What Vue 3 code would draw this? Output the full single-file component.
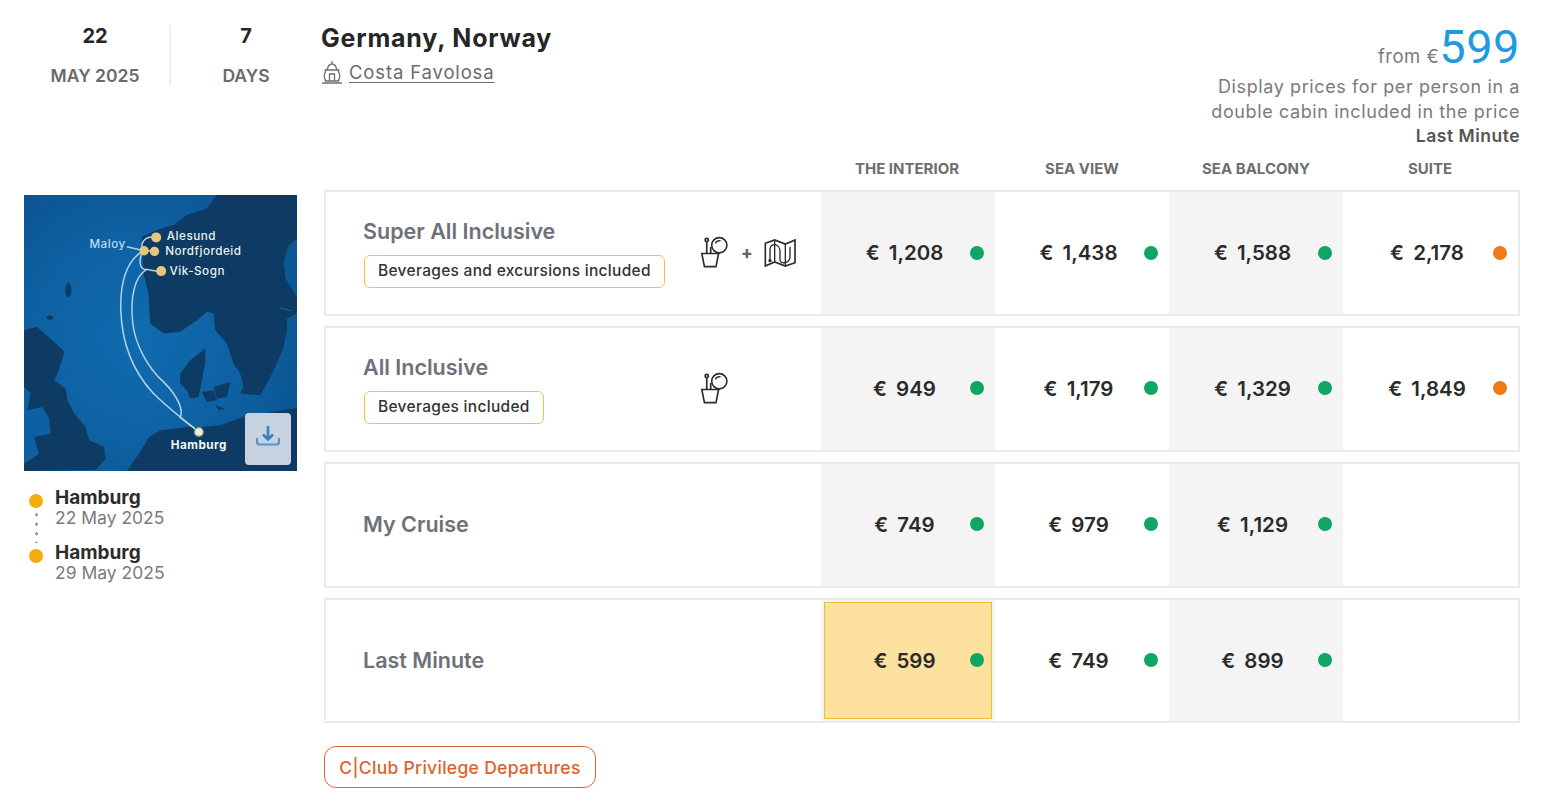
<script setup>
const cols = ['The Interior', 'Sea View', 'Sea Balcony', 'Suite']
const rows = [
  { name: 'Super All Inclusive', badge: 'Beverages and excursions included', drink: true, map: true,
    prices: [['1,208', 'g'], ['1,438', 'g'], ['1,588', 'g'], ['2,178', 'o']] },
  { name: 'All Inclusive', badge: 'Beverages included', drink: true, map: false,
    prices: [['949', 'g'], ['1,179', 'g'], ['1,329', 'g'], ['1,849', 'o']] },
  { name: 'My Cruise', prices: [['749', 'g'], ['979', 'g'], ['1,129', 'g'], null] },
  { name: 'Last Minute', best: 0, prices: [['599', 'g'], ['749', 'g'], ['899', 'g'], null] },
]
const stops = [
  { city: 'Hamburg', date: '22 May 2025' },
  { city: 'Hamburg', date: '29 May 2025' },
]
</script>

<template>
  <div class="page">
    <header class="top">
      <div class="fact fact-date"><strong>22</strong><span>MAY 2025</span></div>
      <div class="fact fact-days"><strong>7</strong><span>DAYS</span></div>
      <div class="title">
        <h1>Germany, Norway</h1>
        <div class="ship">
          <svg width="22" height="24" viewBox="0 0 22 24" fill="none" stroke="#6f6f6f" stroke-width="1.300">
            <path d="M11 1v3M6 10c1-4 3-6 5-6s4 2 5 6M3.500 10h15M5 10l-2 6M17 10l2 6M3 16l1.500 5h13l1.500-5M8.500 21v-7h5v7M1 23h20" />
          </svg>
          <a>Costa Favolosa</a>
        </div>
      </div>
      <div class="price">
        <div class="from">from €<b>599</b></div>
        <p>Display prices for per person in a<br />double cabin included in the price</p>
        <strong>Last Minute</strong>
      </div>
    </header>

    <div class="body">
      <aside class="side">
        <div class="map">
          <svg class="map-art" viewBox="72 45 818 827" preserveAspectRatio="none">
            <defs>
              <radialGradient id="sea" cx="42%" cy="52%" r="65%">
                <stop offset="0" stop-color="#106baf" />
                <stop offset="0.55" stop-color="#0e62a4" />
                <stop offset="1" stop-color="#0c5592" />
              </radialGradient>
              <filter id="soft"><feGaussianBlur stdDeviation="1.800" /></filter>
            </defs>
            <rect x="72" y="45" width="818" height="827" fill="url(#sea)" />
            <g fill="#0b3a63" filter="url(#soft)">
              <path d="M425 170 480 146 520 135 560 105 590 95 620 85 650 45H890V175L865 195 850 245 855 295 880 335 890 355V400L860 415 860 450 850 500 830 550 800 610 780 645 720 640 730 620 720 580 700 550 680 490 645 450 640 400 620 395 590 420 540 455 490 460 450 430 445 340 430 280Z" />
              <path d="M540 580 570 540 615 505 615 550 605 600 595 650 570 655 560 630 540 610Z" />
              <path d="M605 635 640 630 650 660 620 665Z" />
              <path d="M640 620 690 605 680 650 650 655Z" />
              <path d="M645 675 675 685 655 690Z" />
              <path d="M380 872 417 820 447 770 480 750 560 740 610 740 660 735 730 710 880 685 890 685V872Z" />
              <path d="M72 450 110 440 190 510 192 520 172 580 162 600 197 625 202 660 222 700 257 740 267 780 312 800 317 835 287 868 72 872Z" />
              <ellipse cx="205" cy="330" rx="9" ry="22" />
              <ellipse cx="150" cy="412" rx="10" ry="6" />
            </g>
            <path d="M72 620 92 640 82 690 127 680 147 715 152 760 102 770 117 820 72 850Z" fill="#0e60a2" filter="url(#soft)" />
            <path d="M838 383 875 393" stroke="#1a6aa8" stroke-width="3" fill="none" />
            <g fill="none" stroke="#afd2e8" stroke-width="4.500">
              <path d="M430 212C380 240 360 300 362 390 365 480 395 570 460 640 510 690 560 725 596 755" />
              <path d="M440 268C400 290 390 360 398 430 405 490 440 560 490 605 535 650 550 690 540 712L596 755" />
              <path d="M430 212C418 195 430 165 468 172M430 212C415 235 415 270 440 268 455 270 470 275 483 273M432 212H463M380 200 432 212" />
            </g>
            <g fill="#e5c67c">
              <circle cx="468" cy="172" r="15" />
              <circle cx="432" cy="212" r="14" />
              <circle cx="463" cy="214" r="14" />
              <circle cx="483" cy="273" r="15" />
            </g>
            <circle cx="596" cy="755" r="13" fill="#f1eed6" stroke="#8c9c86" stroke-width="4" />
            <g class="map-label">
              <text x="500" y="181">Alesund</text>
              <text x="495" y="226">Nordfjordeid</text>
              <text x="508" y="285">Vik-Sogn</text>
              <text class="maloy" x="268" y="203">Maloy</text>
              <text class="hub" x="512" y="807">Hamburg</text>
            </g>
          </svg>
          <button class="download" aria-label="Download map">
            <svg width="24" height="20" viewBox="0 0 24 20" fill="none" stroke="#3a7fc0" stroke-width="2.200">
              <path d="M12 0v13M7 8.500l5 5 5-5" stroke-width="2.600" />
              <path d="M1 12v4a2.500 2.500 0 0 0 2.500 2.500h17A2.500 2.500 0 0 0 23 16v-4" stroke="#5d93c8" />
            </svg>
          </button>
        </div>
        <ul class="stops">
          <li v-for="s in stops" :key="s.date">
            <i class="stop-dot"></i>
            <div><strong>{{ s.city }}</strong><span>{{ s.date }}</span></div>
          </li>
        </ul>
      </aside>

      <main class="main">
        <div class="heads">
          <span v-for="c in cols" :key="c">{{ c }}</span>
        </div>
        <div class="rows">
          <section v-for="r in rows" :key="r.name" class="row">
            <div class="label">
              <div class="label-text">
                <h2>{{ r.name }}</h2>
                <span v-if="r.badge" class="badge">{{ r.badge }}</span>
              </div>
              <div v-if="r.drink" class="perks">
                <svg width="30" height="33" viewBox="1140 155 90 100" fill="none" stroke="#2b2b2b" stroke-width="5">
                  <path d="M1145 208H1196L1188 248H1153Z" />
                  <circle cx="1198" cy="183" r="23" fill="#fff" />
                  <path d="M1186 178a14 14 0 0 1 16-8" stroke-width="4" />
                  <circle cx="1160" cy="167" r="5" />
                  <path d="M1160 172V208M1172 208V188" />
                </svg>
                <template v-if="r.map">
                  <b class="plus">+</b>
                  <svg width="32" height="28" viewBox="1330 163 96 84" fill="none" stroke="#2b2b2b" stroke-width="5">
                    <path d="M1334 176 1362 166 1394 178 1423 166V234L1394 244 1362 232 1334 244Z" />
                    <path d="M1362 166V232M1394 178V244" stroke-width="4" />
                    <path d="M1348 226V196C1348 170 1378 178 1378 200V226C1378 240 1408 236 1408 216V186" stroke-width="4" />
                    <circle cx="1348" cy="228" r="5" fill="#2b2b2b" stroke="none" />
                  </svg>
                </template>
              </div>
            </div>
            <div v-for="(p, i) in r.prices" :key="i" class="cell" :class="{ shade: i % 2 === 0 }">
              <div v-if="p" class="cell-in" :class="{ best: r.best === i }">
                <span class="amount">€ {{ p[0] }}</span>
                <i class="dot" :class="p[1]"></i>
              </div>
            </div>
          </section>
        </div>
        <button class="club">C|Club Privilege Departures</button>
      </main>
    </div>
  </div>
</template>

<style>
html, body { background: #fff; }
</style>

<style scoped>
* { box-sizing: border-box; }
.page { width: 1541px; height: 800px; overflow: hidden; font-family: Inter, "Liberation Sans", sans-serif; color: #222; background: #fff; }
h1, h2, p, ul { margin: 0; padding: 0; }

.top { display: flex; height: 160px; padding: 0 21px 0 24px; }
.fact { display: flex; flex-direction: column; justify-content: space-between; height: 60px; margin-top: 25px; padding-top: 1px; align-items: center; }
.fact strong { font-size: 20px; line-height: 20px; font-weight: 700; color: #262626; }
.fact span { font-size: 17.500px; line-height: 18px; font-weight: 600; color: #6a6a6a; }
.fact-date { width: 147px; padding-right: 3px; border-right: 2px solid #eeeeee; }
.fact-days { width: 150px; }
.title { padding-top: 23px; }
.title h1 { font-size: 25px; line-height: 30px; font-weight: 700; color: #262626; letter-spacing: 0.800px; }
.ship { display: flex; align-items: center; gap: 6px; margin-top: 7px; }
.ship a { font-size: 18.500px; line-height: 24px; color: #6b6b6b; text-decoration: underline; text-underline-offset: 3px; text-decoration-thickness: 1px; letter-spacing: 0.850px; }
.price { margin-left: auto; text-align: right; padding-top: 22px; color: #7b7b7b; }
.from { font-size: 18.500px; letter-spacing: 0.500px; line-height: 50px; height: 52px; }
.from b { font-size: 47px; font-weight: 400; color: #2299e0; font-family: Roboto, sans-serif; letter-spacing: 0.500px; }
.price p { font-size: 18px; line-height: 25px; letter-spacing: 0.600px; }
.price strong { display: block; font-size: 17.500px; line-height: 24px; letter-spacing: 0.500px; font-weight: 600; color: #555; }

.body { display: flex; padding-left: 24px; gap: 27px; }
.side { width: 273px; padding-top: 35px; }
.map { position: relative; width: 273px; height: 276px; }
.map-art { display: block; width: 273px; height: 276px; }
.map-label text { font-family: Inter, sans-serif; font-size: 35px; letter-spacing: 1.500px; font-weight: 500; fill: #eaf0f0; }
.map-label text.maloy { fill: #bcdcf2; }
.map-label text.hub { font-weight: 700; fill: #f4f6f6; }
.download { position: absolute; left: 221px; top: 218px; width: 46px; height: 52px; border: none; border-radius: 4px; background: #c6d2df; padding: 0 0 6px; display: flex; align-items: center; justify-content: center; }

.stops { list-style: none; margin-top: 17px; display: flex; flex-direction: column; gap: 16px; position: relative; }
.stops::before { content: ""; position: absolute; left: 11px; top: 22px; width: 3px; height: 33px; background: radial-gradient(circle, #969696 1.400px, transparent 1.700px) 0 0 / 3px 9.500px repeat-y; }
.stops li { display: flex; gap: 12px; }
.stop-dot { flex: none; width: 14px; height: 14px; border-radius: 50%; background: #f5ad0e; margin: 6px 0 0 5px; }
.stops strong { display: block; font-size: 19px; line-height: 20px; font-weight: 700; color: #2c2c2c; }
.stops span { display: block; font-size: 17.500px; line-height: 19px; color: #7b7b7b; }

.main { width: 1196px; }
.heads { display: grid; grid-template-columns: 497px repeat(4, 174px); height: 30.300px; }
.heads span { grid-row: 1; text-align: center; font-size: 15px; line-height: 17px; font-weight: 700; color: #6e6e6e; text-transform: uppercase; }
.heads span:nth-child(1) { grid-column: 2; padding-right: 2px; }
.heads span:nth-child(2) { grid-column: 3; }
.heads span:nth-child(3) { grid-column: 4; }
.heads span:nth-child(4) { grid-column: 5; }
.rows { display: flex; flex-direction: column; gap: 10px; }
.row { display: grid; grid-template-columns: 495px repeat(3, 174px) 1fr; height: 125.800px; border: 2px solid #ebebeb; }
.label { display: flex; align-items: center; padding-left: 37px; padding-bottom: 1px; }
.label-text { width: 337px; flex: none; }
h2 { font-size: 21.500px; line-height: 30px; font-weight: 600; color: #6e7178; }
.badge { display: inline-block; margin: 9px 0 1px 1px; height: 33px; line-height: 30px; padding: 0 13px; font-size: 15.500px; letter-spacing: 0.300px; font-weight: 500; color: #333; border: 1.500px solid #f1c24a; border-radius: 6px; white-space: nowrap; }
.perks { display: flex; align-items: center; gap: 11px; }
.plus { font-size: 17px; font-weight: 800; color: #666; }
.cell { display: flex; }
.shade { background: #f4f4f4; }
.cell-in { flex: 1; display: grid; grid-template-columns: 1fr 14px; align-items: center; padding: 0 11px 1px 18px; }
.amount { text-align: center; font-size: 20.500px; font-weight: 600; color: #2b2b2b; word-spacing: 4px; white-space: nowrap; }
.dot { width: 14px; height: 14px; border-radius: 50%; }
.dot.g { background: #0fa564; }
.dot.o { background: #f07a16; }
.best { margin: 2px 3px; padding: 0 7px 1px 14px; background: #fde29f; border: 1.500px solid #eebb33; }
.club { display: block; margin-top: 23px; width: 272px; height: 42px; background: #fff; border: 1.500px solid #d9663a; border-radius: 12px; font-family: inherit; font-size: 17.500px; letter-spacing: 0.300px; font-weight: 500; color: #e0622a; padding: 0; }
</style>
